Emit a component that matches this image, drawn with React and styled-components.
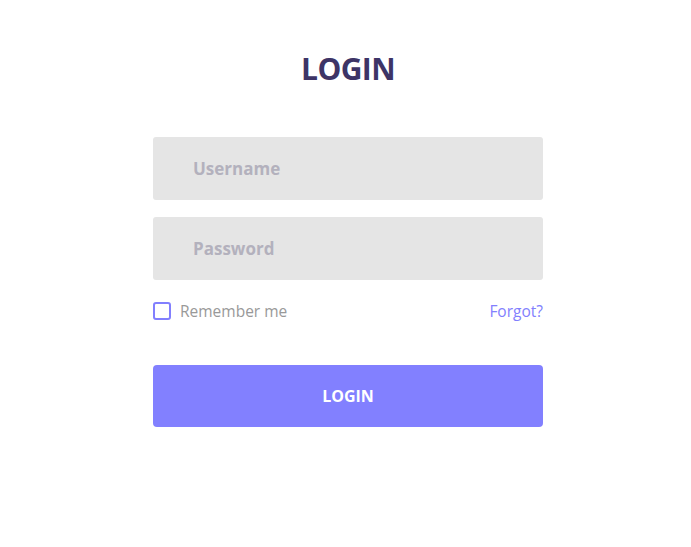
import React, { useState } from "react";
import styled, { createGlobalStyle } from "styled-components";

const GlobalStyle = createGlobalStyle`
  html, body {
    margin: 0;
    padding: 0;
    background: #ffffff;
    font-family: "Open Sans", "Noto Sans", sans-serif;
  }
  * {
    box-sizing: border-box;
  }
`;

const Page = styled.div`
  width: 100%;
  min-height: 547px;
  display: flex;
  justify-content: center;
  padding-left: 5px;
`;

const Form = styled.form`
  width: 390px;
  display: flex;
  flex-direction: column;
  padding-top: 48px;
`;

const Title = styled.h1`
  margin: 0 0 47px;
  text-align: center;
  font-size: 30px;
  line-height: 42px;
  font-weight: 700;
  color: #3d3466;
  letter-spacing: -0.6px;
`;

const Field = styled.input`
  width: 100%;
  height: 63px;
  border: none;
  border-radius: 3px;
  background: #e5e5e5;
  padding: 0 40px;
  margin-bottom: ${({ $last }) => ($last ? "0" : "17px")};
  font-family: inherit;
  font-size: 17px;
  font-weight: 700;
  color: #555;
  outline: none;

  &::placeholder {
    color: #b3b1bd;
  }
`;

const OptionsRow = styled.div`
  display: flex;
  align-items: center;
  justify-content: space-between;
  margin-top: 20px;
  height: 22px;
`;

const CheckLabel = styled.label`
  display: flex;
  align-items: center;
  gap: 9px;
  font-size: 15.5px;
  color: #999999;
  cursor: pointer;
`;

const CheckBox = styled.span`
  width: 18px;
  height: 18px;
  border: 2px solid #827ffe;
  border-radius: 3px;
  background: ${({ $checked }) => ($checked ? "#827ffe" : "#fff")};
`;

const ForgotLink = styled.a`
  font-size: 15.5px;
  color: #827ffe;
  text-decoration: none;
`;

const SubmitButton = styled.button`
  margin-top: 43px;
  height: 62px;
  width: 100%;
  border: none;
  border-radius: 4px;
  background: #8280ff;
  color: #ffffff;
  font-family: inherit;
  font-size: 16px;
  font-weight: 700;
  cursor: pointer;
`;

export default function App() {
  const [remember, setRemember] = useState(false);

  return (
    <>
      <GlobalStyle />
      <Page>
        <Form onSubmit={(e) => e.preventDefault()}>
          <Title>LOGIN</Title>
          <Field type="text" placeholder="Username" />
          <Field type="password" placeholder="Password" $last />
          <OptionsRow>
            <CheckLabel onClick={() => setRemember(!remember)}>
              <CheckBox $checked={remember} />
              Remember me
            </CheckLabel>
            <ForgotLink href="#">Forgot?</ForgotLink>
          </OptionsRow>
          <SubmitButton type="submit">LOGIN</SubmitButton>
        </Form>
      </Page>
    </>
  );
}
